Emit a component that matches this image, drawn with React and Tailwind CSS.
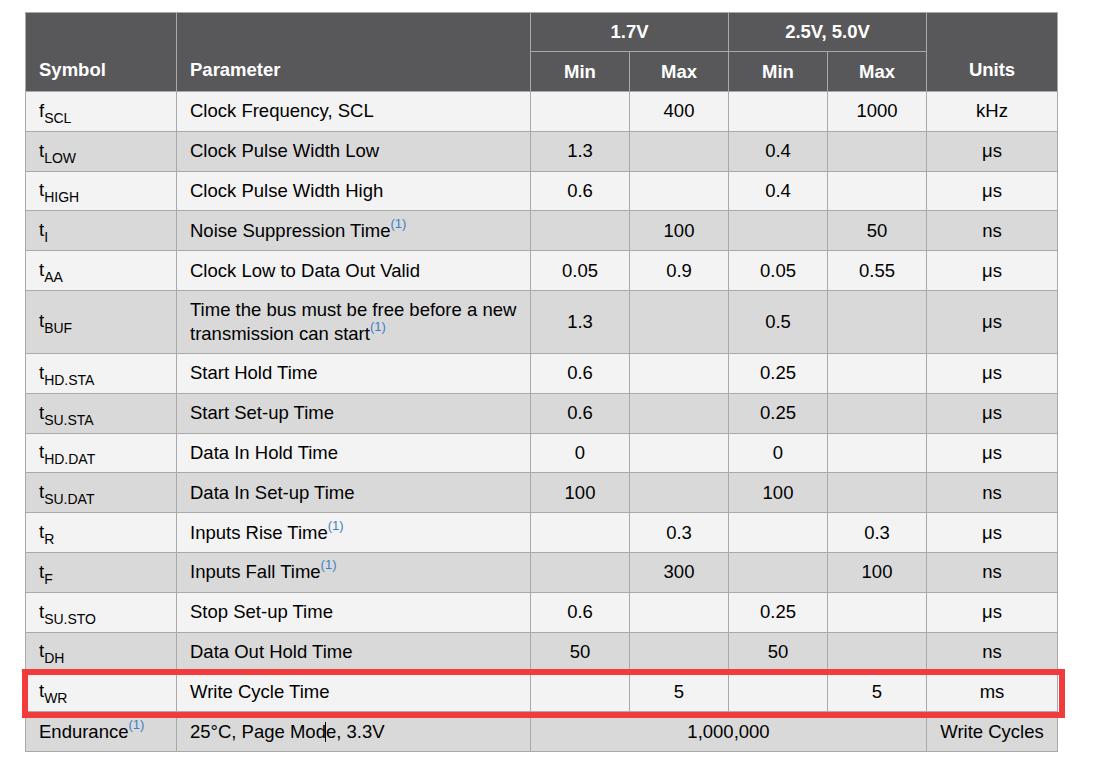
const rows = [
  { symLetter: 'f', sub: 'SCL', param: 'Clock Frequency, SCL', v: ['', '400', '', '1000'], unit: 'kHz' },
  { symLetter: 't', sub: 'LOW', param: 'Clock Pulse Width Low', v: ['1.3', '', '0.4', ''], unit: 'μs' },
  { symLetter: 't', sub: 'HIGH', param: 'Clock Pulse Width High', v: ['0.6', '', '0.4', ''], unit: 'μs' },
  { symLetter: 't', sub: 'I', param: 'Noise Suppression Time', note: true, v: ['', '100', '', '50'], unit: 'ns' },
  { symLetter: 't', sub: 'AA', param: 'Clock Low to Data Out Valid', v: ['0.05', '0.9', '0.05', '0.55'], unit: 'μs' },
  { symLetter: 't', sub: 'BUF', param: 'Time the bus must be free before a new transmission can start', note: true, tall: true, v: ['1.3', '', '0.5', ''], unit: 'μs' },
  { symLetter: 't', sub: 'HD.STA', param: 'Start Hold Time', v: ['0.6', '', '0.25', ''], unit: 'μs' },
  { symLetter: 't', sub: 'SU.STA', param: 'Start Set-up Time', v: ['0.6', '', '0.25', ''], unit: 'μs' },
  { symLetter: 't', sub: 'HD.DAT', param: 'Data In Hold Time', v: ['0', '', '0', ''], unit: 'μs' },
  { symLetter: 't', sub: 'SU.DAT', param: 'Data In Set-up Time', v: ['100', '', '100', ''], unit: 'ns' },
  { symLetter: 't', sub: 'R', param: 'Inputs Rise Time', note: true, v: ['', '0.3', '', '0.3'], unit: 'μs' },
  { symLetter: 't', sub: 'F', param: 'Inputs Fall Time', note: true, v: ['', '300', '', '100'], unit: 'ns' },
  { symLetter: 't', sub: 'SU.STO', param: 'Stop Set-up Time', v: ['0.6', '', '0.25', ''], unit: 'μs' },
  { symLetter: 't', sub: 'DH', param: 'Data Out Hold Time', v: ['50', '', '50', ''], unit: 'ns' },
  { symLetter: 't', sub: 'WR', param: 'Write Cycle Time', v: ['', '5', '', '5'], unit: 'ms', marked: true },
];

const Note = () => (
  <span className="relative top-[-9px] text-[13px] leading-none text-[#3f7fc6]">(1)</span>
);

const border = 'border border-[#a9a9a9] px-[13px]';
const cell = `${border} align-middle`;

export default function App() {
  return (
    <div className="min-h-[764px] bg-white pl-[25px] pt-[12px] font-['Liberation_Sans',Arial,sans-serif] text-[18.5px] leading-[24px] text-black">
      <table className="w-[1032px] table-fixed border-collapse">
        <colgroup>
          <col className="w-[151px]" />
          <col className="w-[354px]" />
          <col className="w-[99px]" />
          <col className="w-[99px]" />
          <col className="w-[99px]" />
          <col className="w-[99px]" />
          <col className="w-[131px]" />
        </colgroup>
        <thead className="bg-[#58585a] font-bold text-white">
          <tr className="h-[39px]">
            <th rowSpan={2} className={`${border} pb-[9px] text-left align-bottom`}>Symbol</th>
            <th rowSpan={2} className={`${border} pb-[9px] text-left align-bottom`}>Parameter</th>
            <th colSpan={2} className={`${cell} text-center`}>1.7V</th>
            <th colSpan={2} className={`${cell} text-center`}>2.5V, 5.0V</th>
            <th rowSpan={2} className={`${border} pb-[9px] text-center align-bottom`}>Units</th>
          </tr>
          <tr className="h-[40px]">
            <th className={`${cell} text-center`}>Min</th>
            <th className={`${cell} text-center`}>Max</th>
            <th className={`${cell} text-center`}>Min</th>
            <th className={`${cell} text-center`}>Max</th>
          </tr>
        </thead>
        <tbody>
          {rows.map((r, i) => (
            <tr key={r.sub} className={`${r.tall ? 'h-[63px]' : 'h-[39.8px]'} ${i % 2 === 0 ? 'bg-[#f3f3f3]' : 'bg-[#d9d9d9]'}`}>
              <td className={`${cell} relative`}>
                {r.symLetter}
                <span className="relative top-[6px] text-[14px]">{r.sub}</span>
                {r.marked && (
                  <div className="pointer-events-none absolute left-[-4px] top-[-3px] h-[49px] w-[1043px] border-[6px] border-[#f23b3b]" />
                )}
              </td>
              <td className={cell}>
                {r.param}
                {r.note && <Note />}
              </td>
              {r.v.map((v, j) => (
                <td key={j} className={`${cell} text-center`}>{v}</td>
              ))}
              <td className={`${cell} text-center`}>{r.unit}</td>
            </tr>
          ))}
          <tr className="h-[39.8px] bg-[#d9d9d9]">
            <td className={cell}>
              Endurance
              <Note />
            </td>
            <td className={cell}>
              25°C, Page Mod
              <span className="mx-[-0.5px] inline-block h-[20px] w-px bg-black align-[-4px]" />
              e, 3.3V
            </td>
            <td colSpan={4} className={`${cell} text-center`}>1,000,000</td>
            <td className={`${cell} text-center`}>Write Cycles</td>
          </tr>
        </tbody>
      </table>
    </div>
  );
}
